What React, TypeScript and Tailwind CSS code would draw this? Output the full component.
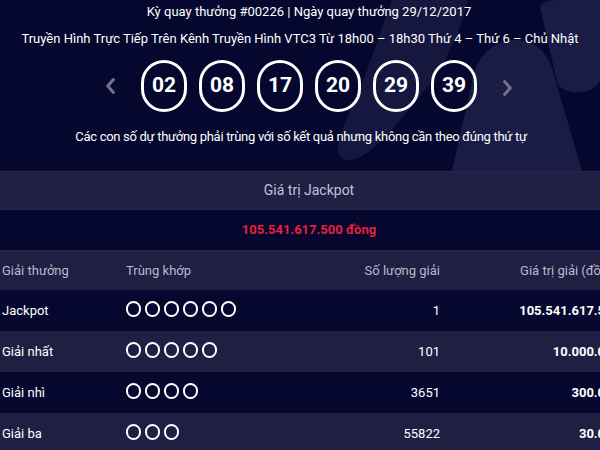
import React from "react";

// ─── Data ─────────────────────────────────────────────────────────────────────

const BALLS = ["02", "08", "17", "20", "29", "39"];

const ROWS = [
  { name: "Jackpot",   match: 6, count: "1",     value: "105.541.617.500" },
  { name: "Giải nhất", match: 5, count: "101",   value: "10.000.000" },
  { name: "Giải nhì",  match: 4, count: "3651",  value: "300.000" },
  { name: "Giải ba",   match: 3, count: "55822", value: "30.000" },
];

// ─── Pieces ───────────────────────────────────────────────────────────────────

function Decor() {
  return (
    <svg viewBox="0 0 600 171" className="absolute inset-0 w-full h-full" preserveAspectRatio="none">
      <path d="M540,6 Q545,0 556,0 L600,0 L600,80 Q594,94 572,92 Q560,90 557,82 Z" fill="#1b1c45" />
      <path d="M452,171 L472,82 Q480,42 515,40 Q542,40 552,68 L582,171 Z" fill="#1b1c45" />
      <path d="M392,0 L468,0 Q455,60 400,120 Q372,155 352,160 Q336,162 338,145 Q340,130 360,90 Z" fill="#16173f" />
    </svg>
  );
}

function Chevron({ dir }: { dir: "left" | "right" }) {
  return (
    <svg viewBox="0 0 12 18" className="w-[11px] h-[16px]" fill="none" stroke="#70728c"
      strokeWidth="3.5" strokeLinecap="square" strokeLinejoin="miter">
      {dir === "left"
        ? <polyline points="9 2 3 9 9 16" />
        : <polyline points="3 2 9 9 3 16" />}
    </svg>
  );
}

function Dots({ n }: { n: number }) {
  return (
    <div className="flex items-center gap-[4px] -mt-[4px]">
      {Array.from({ length: n }).map((_, i) => (
        <span key={i} className="block w-[15px] h-[16px] rounded-full border-[2.5px] border-white" />
      ))}
    </div>
  );
}

// ─── Page ─────────────────────────────────────────────────────────────────────

export default function App() {
  return (
    <div
      className="w-[600px] h-[450px] overflow-hidden bg-[#06072e] text-white text-[13px]"
      style={{ fontFamily: "Roboto, 'Noto Sans', sans-serif" }}
    >
      {/* ── Result header ─────────────────────────────────────────────────── */}
      <div className="relative h-[171px]">
        <Decor />
        <div className="relative flex flex-col items-center pt-[3px]">
          <p className="leading-[18px] pl-[18px]">Kỳ quay thưởng #00226 | Ngày quay thưởng 29/12/2017</p>
          <p className="leading-[18px] mt-[9px] whitespace-nowrap">
            Truyền Hình Trực Tiếp Trên Kênh Truyền Hình VTC3 Từ 18h00 – 18h30 Thứ 4 – Thứ 6 – Chủ Nhật
          </p>

          <div className="flex items-center mt-[12px] h-[52px] pl-[18px]">
            <div className="mr-[25px]"><Chevron dir="left" /></div>
            <div className="flex gap-[12px]">
              {BALLS.map((b) => (
                <div
                  key={b}
                  className="w-[46px] h-[52px] rounded-full border-[3px] border-white flex items-center justify-center text-[21px] font-bold"
                >
                  {b}
                </div>
              ))}
            </div>
            <div className="ml-[25px] mt-[4px]"><Chevron dir="right" /></div>
          </div>

          <p className="leading-[18px] mt-[16px] pl-[2px] tracking-[-0.3px]">
            Các con số dự thưởng phải trùng với số kết quả nhưng không cần theo đúng thứ tự
          </p>
        </div>
      </div>

      {/* ── Jackpot value ─────────────────────────────────────────────────── */}
      <div className="h-[39px] bg-[#1e1f43] border-y border-[#25264c] flex items-center justify-center text-[#c3c4d3] pl-[18px] text-[14px]">
        Giá trị Jackpot
      </div>
      <div className="h-[40px] flex items-center justify-center font-bold text-[#e8213c] pl-[18px]">
        105.541.617.500 đồng
      </div>

      {/* ── Prize table ───────────────────────────────────────────────────── */}
      <div className="w-[622px]">
        <div className="h-[40px] bg-[#1e1f43] flex items-center text-[#b9bacb] border-t border-[#25264c]">
          <div className="w-[126px] pl-[2px]">Giải thưởng</div>
          <div className="w-[204px]">Trùng khớp</div>
          <div className="w-[110px] text-right">Số lượng giải</div>
          <div className="w-[180px] text-right">Giá trị giải (đồng)</div>
        </div>
        {ROWS.map((r, i) => (
          <div
            key={r.name}
            className={`h-[41px] flex items-center ${i % 2 === 0 ? "bg-[#06072e]" : "bg-[#1e1f43]"}`}
          >
            <div className="w-[126px] pl-[2px]">{r.name}</div>
            <div className="w-[204px]"><Dots n={r.match} /></div>
            <div className="w-[110px] text-right">{r.count}</div>
            <div className="w-[180px] text-right font-bold">{r.value}</div>
          </div>
        ))}
      </div>
    </div>
  );
}
